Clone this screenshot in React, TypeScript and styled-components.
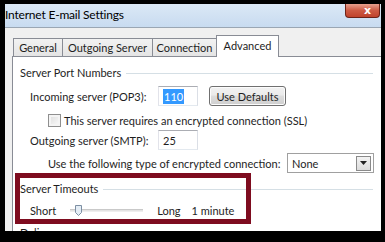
import * as React from 'react';
import styled, { createGlobalStyle, css } from 'styled-components';

const GlobalStyle = createGlobalStyle`
  html, body { margin: 0; padding: 0; background: #000; }
  body { font-family: Lato, "Liberation Sans", sans-serif; white-space: nowrap; }
`;

const Frame = styled.div`
  width: 385px;
  height: 242px;
  box-sizing: border-box;
  background: #000;
  padding: 4px 4px 11px 5px;
`;

const Window = styled.div`
  position: relative;
  height: 100%;
  overflow: hidden;
  background: #f0f0f0;
  display: flex;
  flex-direction: column;
`;

const TitleBar = styled.div`
  height: 23px;
  flex: none;
  display: flex;
  align-items: center;
  justify-content: space-between;
  background: linear-gradient(#dbe8f6, #c8dbf0);
  border-bottom: 1px solid #9aa6b3;
`;

const Title = styled.span`
  font-size: 12px;
  letter-spacing: -0.2px;
  color: #000;
  margin-top: -2px;
`;

const CloseButton = styled.div`
  align-self: flex-start;
  width: 35px;
  height: 14px;
  margin-right: 1px;
  border: 1px solid #6d2217;
  border-top: none;
  border-radius: 0 0 4px 4px;
  background: linear-gradient(#e6a08e, #cd5a43 50%, #c0432c);
  color: #fff;
  font: bold 11px "DejaVu Sans", sans-serif;
  display: flex;
  align-items: center;
  justify-content: center;
  line-height: 1;
  padding-left: 10px;
  box-sizing: border-box;
`;

const Body = styled.div`
  flex: 1;
  padding: 8px 0 0 7px;
  display: flex;
  flex-direction: column;
`;

const TabRow = styled.div`
  display: flex;
  align-items: flex-end;
  height: 20px;
  padding-left: 1px;
  position: relative;
  z-index: 1;
`;

const Tab = styled.div<{ active?: boolean; width: number }>`
  box-sizing: border-box;
  width: ${(p) => p.width}px;
  height: 18px;
  font-size: 11px;
  color: #1e1e1e;
  display: flex;
  align-items: center;
  justify-content: center;
  border: 1px solid #898c95;
  border-bottom: none;
  margin-right: -1px;
  background: linear-gradient(#f2f2f2, #e4e4e4);
  ${(p) =>
    p.active &&
    css`
      height: 22px;
      margin-bottom: -1px;
      padding-bottom: 3px;
      background: #fff;
    `}
`;

const Panel = styled.div`
  flex: 1;
  margin-right: -10px;
  background: #fff;
  border: 1px solid #898c95;
  padding: 0 17px 0 7px;
  font-size: 11px;
  color: #1e1e1e;
`;

const GroupHeader = styled.div<{ top: number }>`
  height: 18px;
  margin-top: ${(p) => p.top}px;
  display: flex;
  align-items: center;
  gap: 5px;
  &::after {
    content: '';
    flex: 1;
    height: 1px;
    background: #d5dfe5;
    margin-top: 2px;
  }
`;

const Row = styled.div<{ top: number; indent: number }>`
  height: 20px;
  margin-top: ${(p) => p.top}px;
  padding-left: ${(p) => p.indent}px;
  display: flex;
  align-items: center;
`;

const FieldLabel = styled.span`
  width: 128px;
  flex: none;
`;

const TextBox = styled.div`
  box-sizing: border-box;
  width: 40px;
  height: 20px;
  flex: none;
  border: 1px solid #abadb3;
  border-left-color: #e2e3ea;
  border-right-color: #dbdfe6;
  border-bottom-color: #e3e9ef;
  display: flex;
  align-items: center;
  padding-left: 4px;
`;

const Selected = styled.span`
  background: #3399ff;
  color: #fff;
  padding: 0 1px;
  line-height: 15px;
`;

const Button = styled.div`
  box-sizing: border-box;
  margin-left: 11px;
  width: 77px;
  height: 20px;
  flex: none;
  border: 1px solid #707070;
  border-radius: 3px;
  background: linear-gradient(#f2f2f2, #ebebeb 45%, #dddddd 50%, #cfcfcf);
  display: flex;
  align-items: center;
  justify-content: center;
  box-shadow: inset 0 0 0 1px #fcfcfc;
`;

const CheckBox = styled.div`
  box-sizing: border-box;
  width: 13px;
  height: 13px;
  flex: none;
  border: 1px solid #8f8f8f;
  background: linear-gradient(135deg, #dcdcdc, #fbfbfb);
  box-shadow: inset 0 0 0 2px #f4f4f4;
  margin-right: 3px;
`;

const Select = styled.div`
  box-sizing: border-box;
  flex: none;
  margin-left: auto;
  margin-right: -1px;
  width: 87px;
  height: 20px;
  border: 1px solid #a0a0a0;
  display: flex;
  align-items: center;
  justify-content: space-between;
  padding: 0 2px 0 4px;
`;

const DropButton = styled.div`
  width: 15px;
  height: 15px;
  box-sizing: border-box;
  border: 1px solid #8a8a8a;
  background: linear-gradient(#f3f3f3, #dcdcdc);
  display: flex;
  align-items: center;
  justify-content: center;
`;

const SliderTrack = styled.div`
  position: relative;
  flex: none;
  width: 73px;
  height: 3px;
  margin-left: 14px;
  margin-right: 14px;
  border-top: 1px solid #c9c9c9;
  border-bottom: 1px solid #eeeeee;
  background: #e3e3e3;
  box-sizing: border-box;
`;

const Thumb = styled.svg`
  position: absolute;
  left: 5px;
  top: -5px;
`;

const SliderLabel = styled.span<{ gap?: number }>`
  margin-right: ${(p) => p.gap ?? 0}px;
`;

const Highlight = styled.div`
  position: absolute;
  left: 10px;
  top: 169px;
  width: 236px;
  height: 51px;
  box-sizing: border-box;
  border: 5px solid #7e0c1f;
  pointer-events: none;
`;

export default function App() {
  return (
    <>
      <GlobalStyle />
      <Frame>
        <Window>
          <TitleBar>
            <Title>Internet E-mail Settings</Title>
            <CloseButton>x</CloseButton>
          </TitleBar>
          <Body>
            <TabRow>
              <Tab width={50}>General</Tab>
              <Tab width={91}>Outgoing Server</Tab>
              <Tab width={65}>Connection</Tab>
              <Tab width={63} active>Advanced</Tab>
            </TabRow>
            <Panel>
              <GroupHeader top={6}>Server Port Numbers</GroupHeader>
              <Row top={5} indent={10}>
                <FieldLabel>Incoming server (POP3):</FieldLabel>
                <TextBox>
                  <Selected>110</Selected>
                </TextBox>
                <Button>Use Defaults</Button>
              </Row>
              <Row top={4} indent={28}>
                <CheckBox />
                This server requires an encrypted connection (SSL)
              </Row>
              <Row top={0} indent={10}>
                <FieldLabel>Outgoing server (SMTP):</FieldLabel>
                <TextBox>25</TextBox>
              </Row>
              <Row top={3} indent={28}>
                Use the following type of encrypted connection:
                <Select>
                  None
                  <DropButton>
                    <svg width="7" height="4" viewBox="0 0 7 4">
                      <path d="M0 0h7L3.5 4z" fill="#222" />
                    </svg>
                  </DropButton>
                </Select>
              </Row>
              <GroupHeader top={6}>Server Timeouts</GroupHeader>
              <Row top={3} indent={10}>
                <SliderLabel>Short</SliderLabel>
                <SliderTrack>
                  <Thumb width="7" height="11" viewBox="0 0 7 11">
                    <path d="M0.5 0.5h6v7l-3 3l-3-3z" fill="#e4edf5" stroke="#7d8fa3" />
                  </Thumb>
                </SliderTrack>
                <SliderLabel gap={11}>Long</SliderLabel>
                <span>1 minute</span>
              </Row>
              <GroupHeader top={3}>Delivery</GroupHeader>
            </Panel>
          </Body>
          <Highlight />
        </Window>
      </Frame>
    </>
  );
}
